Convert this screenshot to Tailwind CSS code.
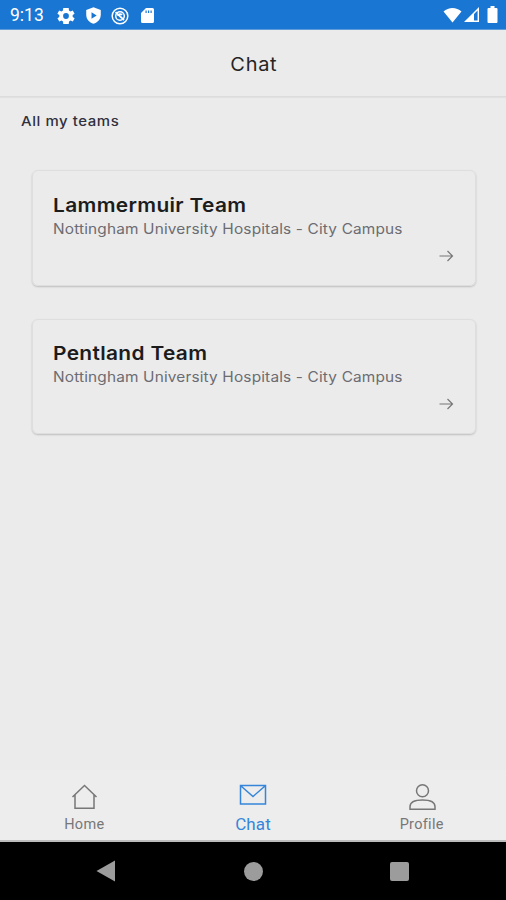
<!DOCTYPE html>
<html lang="en">
<head>
  <meta charset="UTF-8" />
  <meta name="viewport" content="width=device-width, initial-scale=1" />
  <title>Chat</title>
  <script src="https://cdn.jsdelivr.net/npm/@tailwindcss/browser@4"></script>
</head>
<body class="bg-[#ebebeb] font-[Inter,sans-serif]">
  <div class="w-[506px] h-[900px] flex flex-col overflow-hidden">

    <!-- Status bar -->
    <div class="h-[30px] shrink-0 bg-[#1976d2] border-b border-[#5d9bdb] flex items-center justify-between pl-[10px] pr-2 text-white">
      <div class="flex items-center">
        <span class="w-[47px] font-[Roboto,sans-serif] text-[17.5px] leading-none pt-[3px]">9:13</span>
        <svg class="w-[18px] h-[18px] mt-[2px]" viewBox="2 2 20 20" fill="currentColor"><path fill-rule="evenodd" d="M19.4 13a7.600 7.600 0 0 0 0-2l2.100-1.600-2-3.500-2.500 1a7.500 7.500 0 0 0-1.700-1L15 3H9l-.4 2.900a7.500 7.500 0 0 0-1.700 1l-2.500-1-2 3.500L4.600 11a7.600 7.600 0 0 0 0 2l-2.100 1.600 2 3.500 2.500-1a7.500 7.500 0 0 0 1.700 1L9 21h6l.4-2.900a7.500 7.500 0 0 0 1.700-1l2.500 1 2-3.500zM12 15.200a3.200 3.200 0 1 1 0-6.400 3.200 3.200 0 0 1 0 6.400z"/></svg>
        <svg class="ml-[9px] w-[19px] h-[19px] mt-[2px]" viewBox="0 0 24 24" fill="currentColor"><path fill-rule="evenodd" d="M12 1.500 2.800 5V11c0 5.600 3.900 10 9.200 11.500 5.300-1.500 9.200-5.900 9.200-11.500V5zM9.500 8l6.500 4-6.500 4z"/></svg>
        <svg class="ml-[8px] w-[18px] h-[18px] mt-[2px]" viewBox="0 0 18 18" fill="none" stroke="currentColor"><circle cx="9" cy="9" r="7.800" stroke-width="1.500"/><circle cx="9" cy="9" r="4.300" stroke-width="1.500"/><path d="M4.500 5.200 13 13M7 9a2.200 2.200 0 0 1 4-1" stroke-width="1.700"/></svg>
        <svg class="ml-[11px] w-[15px] h-[17px] mt-[2px]" viewBox="0 0 15 17" fill="currentColor"><path fill-rule="evenodd" d="M6 1h6.500A1.500 1.500 0 0 1 14 2.500v12a1.500 1.500 0 0 1-1.500 1.500h-10A1.500 1.500 0 0 1 1 14.500V6zM5.500 3.500V6h1.200V3.500zM8 3.500V6h1.200V3.500zM10.500 3.500V6h1.200V3.500z"/></svg>
      </div>
      <div class="flex items-center">
        <svg class="w-[19px] h-[16px]" viewBox="0 0 19 16" fill="currentColor"><path d="M.5 4.500C5.500-.3 13.500-.3 18.500 4.500L9.500 15.500z"/></svg>
        <svg class="ml-[2px] w-[16px] h-[16px]" viewBox="0 0 16 16"><path d="M14.300 1.700v12.600H1.700z" fill="none" stroke="currentColor" stroke-width="1.400"/><path d="M10 6v8.500H1z" fill="currentColor"/></svg>
        <svg class="ml-[7px] w-[11px] h-[17px]" viewBox="0 0 11 17" fill="currentColor"><path d="M3.500 0h4v2H9.500a1 1 0 0 1 1 1v13a1 1 0 0 1-1 1h-8a1 1 0 0 1-1-1V3a1 1 0 0 1 1-1h2z"/></svg>
      </div>
    </div>

    <!-- Header -->
    <header class="h-[67px] shrink-0 border-b border-[#dcdcdc] shadow-[0_1px_1px_rgba(0,0,0,0.04)] flex items-center justify-center">
      <h1 class="text-[18.5px] tracking-[0.65px] scale-x-[1.08] text-[#252525] pl-[2px] pt-[3px]">Chat</h1>
    </header>

    <!-- Teams -->
    <main class="flex-1 px-8">
      <h2 class="-ml-[11px] mt-[14px] h-5 leading-5 text-[13px] font-medium tracking-[0.5px] origin-left scale-x-[1.15] text-[#30303f]">All my teams</h2>

      <section class="mt-[39px] h-[116px] w-[444px] rounded-md border border-[#dedede] shadow-[0_1px_2px_rgba(0,0,0,0.2)] px-5 pt-[22px]">
        <h3 class="h-6 leading-[26px] whitespace-nowrap text-[19px] font-semibold tracking-[0.3px] origin-left scale-x-[1.1] text-[#1c1c1c]">Lammermuir Team</h3>
        <p class="h-5 leading-[23px] whitespace-nowrap text-[14px] tracking-[0.14px] origin-left scale-x-[1.1] text-[#6c6c72]">Nottingham University Hospitals - City Campus</p>
        <svg class="ml-auto mr-px mt-[11px] w-[16px] h-[16px]" viewBox="0 0 16 16" fill="none" stroke="#777" stroke-width="1.200"><path d="M1.500 8h13M9.500 3l5 5-5 5"/></svg>
      </section>

      <section class="mt-[33px] h-[115px] w-[444px] rounded-md border border-[#dedede] shadow-[0_1px_2px_rgba(0,0,0,0.2)] px-5 pt-[21px]">
        <h3 class="h-6 leading-[26px] whitespace-nowrap text-[19px] font-semibold tracking-[0.3px] origin-left scale-x-[1.1] text-[#1c1c1c]">Pentland Team</h3>
        <p class="h-5 leading-[23px] whitespace-nowrap text-[14px] tracking-[0.14px] origin-left scale-x-[1.1] text-[#6c6c72]">Nottingham University Hospitals - City Campus</p>
        <svg class="ml-auto mr-px mt-[11px] w-[16px] h-[16px]" viewBox="0 0 16 16" fill="none" stroke="#777" stroke-width="1.200"><path d="M1.500 8h13M9.500 3l5 5-5 5"/></svg>
      </section>
    </main>

    <!-- Tabs -->
    <nav class="h-[72px] shrink-0 grid grid-cols-3 bg-[#ededed] border-b-2 border-[#bcbcbc] font-[Roboto,sans-serif] text-[14.5px] text-[#777]">
      <a class="flex flex-col items-center pt-[13px]">
        <svg class="w-[28px] h-[28px]" viewBox="0 0 28 28" fill="none" stroke="currentColor" stroke-width="1.500"><path d="M2.500 14 14.500 2.500 26.500 14M5 12v13.200h19V12"/></svg>
        <span class="leading-5 mt-[4px] tracking-[0.3px]">Home</span>
      </a>
      <a class="flex flex-col items-center pt-[13px] text-[#3585da]">
        <svg class="w-[28px] h-[28px]" viewBox="0 0 28 28" fill="none" stroke="currentColor" stroke-width="1.500"><path d="M1.500 2.500h25v18.500h-25zM2 3l12 10.500L26 3"/></svg>
        <span class="leading-5 mt-[3px] text-[17px] tracking-[0.1px]">Chat</span>
      </a>
      <a class="flex flex-col items-center pt-[13px]">
        <svg class="w-[28px] h-[28px]" viewBox="0 0 28 28" fill="none" stroke="currentColor" stroke-width="1.500"><circle cx="14.500" cy="7.800" r="6"/><path d="M2 26.200v-2.500C2 19.200 7.500 17 14.500 17S27 19.200 27 23.700v2.500z"/></svg>
        <span class="leading-5 mt-[4px] tracking-[0.3px]">Profile</span>
      </a>
    </nav>

    <!-- Android navigation -->
    <div class="h-[58px] shrink-0 bg-black flex items-center pl-[96px] text-[#9c9c9c]">
      <svg class="w-[20px] h-[22px]" viewBox="0 0 20 22" fill="currentColor"><path d="M19 .5v21L.5 11z"/></svg>
      <div class="ml-[128px] w-[19px] h-[19px] rounded-full bg-[#9c9c9c]"></div>
      <div class="ml-[127px] w-[19px] h-[19px] rounded-[2px] bg-[#9c9c9c]"></div>
    </div>
  </div>
</body>
</html>
